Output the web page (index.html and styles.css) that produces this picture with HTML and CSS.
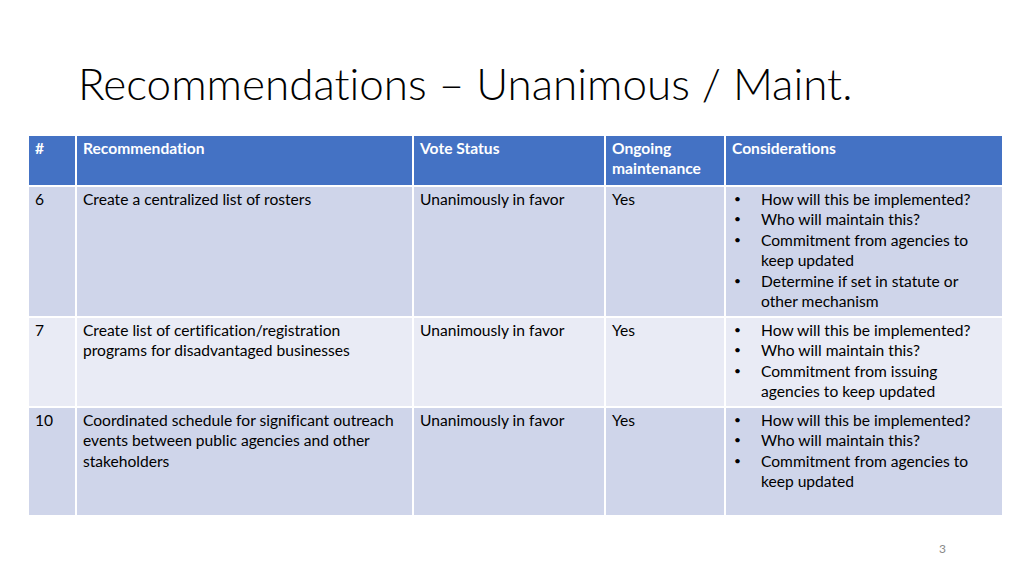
FILE: index.html
```html
<!DOCTYPE html>
<html>
<head>
<meta charset="utf-8">
<link rel="stylesheet" href="styles.css">
</head>
<body>
<div class="slide">
  <h1 class="title">Recommendations – Unanimous / Maint.</h1>
  <table class="rec-table">
    <colgroup>
      <col class="c-num"><col class="c-rec"><col class="c-vote"><col class="c-ongo"><col class="c-cons">
    </colgroup>
    <thead>
      <tr class="head">
        <th>#</th><th>Recommendation</th><th>Vote Status</th><th>Ongoing maintenance</th><th>Considerations</th>
      </tr>
    </thead>
    <tbody>
      <tr class="row-a r1">
        <td>6</td>
        <td>Create a centralized list of rosters</td>
        <td>Unanimously in favor</td>
        <td>Yes</td>
        <td><ul class="bullets">
          <li>How will this be implemented?</li>
          <li>Who will maintain this?</li>
          <li>Commitment from agencies to keep updated</li>
          <li>Determine if set in statute or other mechanism</li>
        </ul></td>
      </tr>
      <tr class="row-b r2">
        <td>7</td>
        <td>Create list of certification/registration programs for disadvantaged businesses</td>
        <td>Unanimously in favor</td>
        <td>Yes</td>
        <td><ul class="bullets">
          <li>How will this be implemented?</li>
          <li>Who will maintain this?</li>
          <li>Commitment from issuing agencies to keep updated</li>
        </ul></td>
      </tr>
      <tr class="row-a r3">
        <td>10</td>
        <td>Coordinated schedule for significant outreach events between public agencies and other stakeholders</td>
        <td>Unanimously in favor</td>
        <td>Yes</td>
        <td><ul class="bullets">
          <li>How will this be implemented?</li>
          <li>Who will maintain this?</li>
          <li>Commitment from agencies to keep updated</li>
        </ul></td>
      </tr>
    </tbody>
  </table>
  <div class="page-num">3</div>
</div>
</body>
</html>
```
FILE: styles.css
```css
html, body {
  margin: 0;
  padding: 0;
  background: #ffffff;
}
.slide {
  width: 1024px;
  height: 576px;
  position: relative;
  overflow: hidden;
  font-family: Lato, "Open Sans", sans-serif;
  font-variant-ligatures: none;
  color: #000;
}
.title {
  margin: 0;
  padding: 56px 0 0 78px;
  height: 78px;
  box-sizing: content-box;
  font-family: Lato, sans-serif;
  font-weight: 300;
  font-size: 44px;
  line-height: 54px;
  color: #000;
  white-space: nowrap;
}
.rec-table {
  margin-left: 27px;
  border-collapse: collapse;
  table-layout: fixed;
  width: 975px;
  font-size: 15.6px;
  line-height: 20.4px;
}
.c-num { width: 48px; }
.c-rec { width: 337px; }
.c-vote { width: 192px; }
.c-ongo { width: 120px; }
.c-cons { width: 278px; }
.rec-table th, .rec-table td {
  border: 2px solid #ffffff;
  padding: 2px 6px 3px 6px;
  vertical-align: top;
  text-align: left;
}
.rec-table th {
  background: #4472c4;
  color: #ffffff;
  font-weight: 700;
}
.head { height: 51px; }
.row-a td { background: #cfd5ea; }
.row-b td { background: #e9ebf5; }
.r1 { height: 131px; }
.r2 { height: 90px; }
.r3 { height: 109px; }
.bullets {
  margin: 0;
  padding: 0 0 0 29px;
  list-style: none;
}
.bullets li {
  position: relative;
}
.bullets li::before {
  content: "•";
  position: absolute;
  left: -27px;
  top: 0;
  font-size: 12px;
}
.page-num {
  position: absolute;
  left: 939px;
  top: 541px;
  font-size: 12px;
  color: #898989;
  font-family: Lato, sans-serif;
}
```
